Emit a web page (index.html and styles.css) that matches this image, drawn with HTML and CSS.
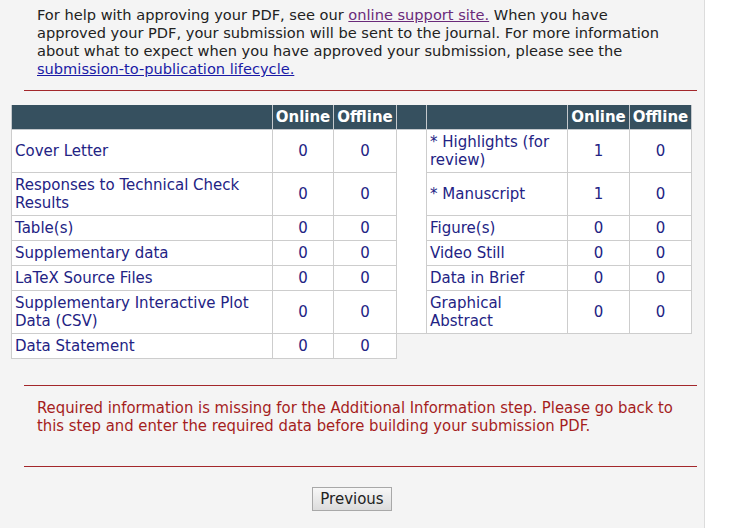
FILE: index.html
```html
<!DOCTYPE html>
<html>
<head>
<meta charset="utf-8">
<link rel="stylesheet" href="styles.css">
</head>
<body>
<div class="panel">
  <p class="intro">For help with approving your PDF, see our <a class="visited" href="#">online support site.</a> When you have approved your PDF, your submission will be sent to the journal. For more information about what to expect when you have approved your submission, please see the <a class="link" href="#">submission-to-publication lifecycle.</a></p>
  <hr class="rule rule-top">
  <table class="files">
    <colgroup>
      <col class="c-name"><col class="c-num"><col class="c-num2"><col class="c-gap"><col class="c-name2"><col class="c-num3"><col class="c-num3">
    </colgroup>
    <thead>
      <tr><th></th><th>Online</th><th>Offline</th><th></th><th></th><th>Online</th><th>Offline</th></tr>
    </thead>
    <tbody>
      <tr><td class="name">Cover Letter</td><td class="num">0</td><td class="num">0</td><td class="gap" rowspan="6"></td><td class="name">* Highlights (for review)</td><td class="num">1</td><td class="num">0</td></tr>
      <tr><td class="name">Responses to Technical Check Results</td><td class="num">0</td><td class="num">0</td><td class="name">* Manuscript</td><td class="num">1</td><td class="num">0</td></tr>
      <tr><td class="name">Table(s)</td><td class="num">0</td><td class="num">0</td><td class="name">Figure(s)</td><td class="num">0</td><td class="num">0</td></tr>
      <tr><td class="name">Supplementary data</td><td class="num">0</td><td class="num">0</td><td class="name">Video Still</td><td class="num">0</td><td class="num">0</td></tr>
      <tr><td class="name">LaTeX Source Files</td><td class="num">0</td><td class="num">0</td><td class="name">Data in Brief</td><td class="num">0</td><td class="num">0</td></tr>
      <tr><td class="name">Supplementary Interactive Plot Data (CSV)</td><td class="num">0</td><td class="num">0</td><td class="name">Graphical Abstract</td><td class="num">0</td><td class="num">0</td></tr>
      <tr><td class="name">Data Statement</td><td class="num">0</td><td class="num">0</td><td class="empty" colspan="4"></td></tr>
    </tbody>
  </table>
  <hr class="rule rule-mid">
  <p class="error">Required information is missing for the Additional Information step. Please go back to this step and enter the required data before building your submission PDF.</p>
  <hr class="rule rule-bottom">
  <div class="actions"><button class="btn" type="button">Previous</button></div>
</div>
</body>
</html>
```
FILE: styles.css
```css
html, body {
  margin: 0;
  padding: 0;
  background: #ffffff;
}
body {
  font-family: "DejaVu Sans", Verdana, sans-serif;
  font-size: 14px;
  line-height: 18px;
  color: #222222;
}
.panel {
  width: 705px;
  min-height: 528px;
  background: #f4f4f4;
  border-right: 1px solid #dcdcdc;
  padding-top: 6px;
  box-sizing: border-box;
}
.intro {
  margin: 0 0 0 37px;
  width: 642px;
  font-size: 14.6px;
}
.intro a {
  text-decoration: underline;
}
.intro .visited { color: #6a2a7a; }
.intro .link { color: #1a1aa6; white-space: nowrap; }
.rule {
  border: 0;
  border-top: 1px solid #a3272b;
  height: 0;
  margin: 0 0 0 24px;
  width: 673px;
}
.rule-top { margin-top: 12px; }
.files {
  margin: 14px 0 0 11px;
  border-collapse: collapse;
  table-layout: fixed;
  width: 681px;
  font-size: 15px;
}
.c-name { width: 261px; }
.c-num { width: 61px; }
.c-num2 { width: 63px; }
.c-gap { width: 30px; }
.c-name2 { width: 141px; }
.c-num3 { width: 62px; }
.files th {
  background: #36505f;
  color: #ffffff;
  font-weight: bold;
  border: 1px solid #c4c8cc;
  border-top: 0;
  padding: 3px 0 3px;
  text-align: center;
  height: 18px;
  white-space: nowrap;
  overflow: hidden;
}
.files td {
  background: #ffffff;
  border: 1px solid #cdcdcd;
  padding: 3px 3px;
  color: #232384;
  vertical-align: middle;
}
.files td.num { text-align: center; }
.files td.gap { padding: 0; }
.files td.empty {
  background: transparent;
  border: none;
}
.rule-mid { margin-top: 26px; }
.error {
  margin: 13px 0 0 37px;
  width: 640px;
  font-family: "Liberation Sans Narrow", "DejaVu Sans Condensed", "Arial Narrow", sans-serif;
  font-size: 16.5px;
  line-height: 18px;
  color: #a51d1d;
}
.rule-bottom { margin-top: 31px; }
.actions {
  display: flex;
  justify-content: center;
  padding-top: 20px;
}
.btn {
  font-family: "DejaVu Sans", Verdana, sans-serif;
  font-size: 15px;
  color: #222222;
  height: 24px;
  width: 80px;
  padding: 0;
  background: linear-gradient(#f7f7f7, #dcdcdc);
  border: 1px solid #a8a8a8;
  border-radius: 0;
}
```
